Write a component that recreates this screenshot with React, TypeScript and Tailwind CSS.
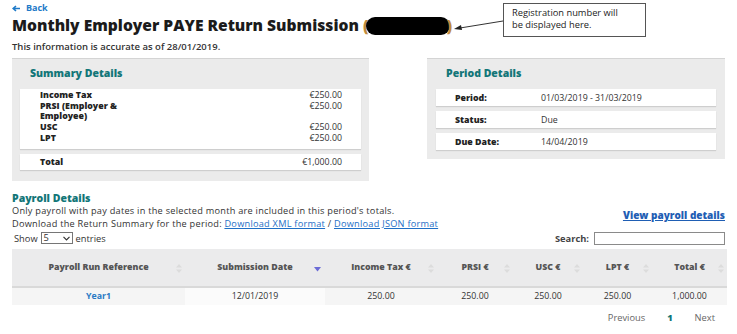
import React from 'react';

const summaryRows = [
  { label: 'Income Tax', value: '€250.00' },
  { label: 'PRSI (Employer & Employee)', value: '€250.00' },
  { label: 'USC', value: '€250.00' },
  { label: 'LPT', value: '€250.00' },
];

const periodRows = [
  { label: 'Period:', value: '01/03/2019 - 31/03/2019' },
  { label: 'Status:', value: 'Due' },
  { label: 'Due Date:', value: '14/04/2019' },
];

const columns = [
  { title: 'Payroll Run Reference', width: 'w-[173px]' },
  { title: 'Submission Date', width: 'w-[140px]', sorted: true },
  { title: 'Income Tax €', width: 'w-[112px]' },
  { title: 'PRSI €', width: 'w-[76px]' },
  { title: 'USC €', width: 'w-[70px]' },
  { title: 'LPT €', width: 'w-[69px]' },
  { title: 'Total €', width: 'w-[75px]' },
];

const row = ['Year1', '12/01/2019', '250.00', '250.00', '250.00', '250.00', '1,000.00'];

const SortIcon = ({ active }: { active?: boolean }) =>
  active ? (
    <svg width="7" height="5" viewBox="0 0 7 5" className="absolute right-[4px] top-[18px]">
      <path d="M0 0h7L3.5 4.5z" fill="#6b6bd6" />
    </svg>
  ) : (
    <svg width="6" height="9" viewBox="0 0 6 9" className="absolute right-[3px] top-[15px]">
      <path d="M0 3.5L3 0l3 3.5z" fill="#dcdcdc" />
      <path d="M0 5.5h6L3 9z" fill="#dcdcdc" />
    </svg>
  );

export default function App() {
  return (
    <div className="relative w-[737px] h-[334px] bg-white overflow-hidden font-['Open_Sans',sans-serif] text-[#333]">
      <div className="px-[12px] pt-[2px]">
        {/* Header */}
        <a className="flex items-center gap-[6px] text-[9px] font-bold text-[#1e7ac8] leading-[12px]">
          <svg width="8" height="7" viewBox="0 0 8 7">
            <path d="M8 3.5H2M4 1L1.2 3.5 4 6" stroke="#1e7ac8" strokeWidth="1.6" fill="none" />
          </svg>
          Back
        </a>
        <h1 className="mt-[1px] flex items-center text-[15.6px] font-extrabold text-[#1b1b1b] leading-[21px]">
          Monthly Employer PAYE Return Submission&nbsp;
          <span className="text-[#c08a3e]">(</span>
          <span className="inline-block w-[84px] h-[18px] -mx-[3px] rounded-full bg-black" />
          <span className="text-[#c08a3e]">)</span>
        </h1>
        <p className="mt-[5px] text-[9.5px] font-semibold text-[#333] leading-[12px]">
          This information is accurate as of 28/01/2019.
        </p>

        {/* Panels */}
        <div className="mt-[5px] flex items-start justify-between">
          <div className="w-[357px] h-[123px] bg-[#ebebeb] border-t border-[#d4d4d4] px-[8px] pt-[7px]">
            <h2 className="pl-[10px] text-[10.5px] font-extrabold text-[#127678] leading-[14px]">Summary Details</h2>
            <div className="mt-[9px] bg-white shadow-[0_1px_1px_rgba(0,0,0,0.12)] pl-[20px] pr-[19px] pt-[1px] pb-[5px] text-[8.8px] font-extrabold leading-[10.7px] text-[#222]">
              {summaryRows.map((r) => (
                <div key={r.label} className="flex justify-between">
                  <span className="w-[110px]">{r.label}</span>
                  <span className="font-normal text-[#333]">{r.value}</span>
                </div>
              ))}
            </div>
            <div className="mt-[5px] bg-white shadow-[0_1px_1px_rgba(0,0,0,0.12)] pl-[20px] pr-[19px] py-[3px] text-[8.8px] font-extrabold leading-[10.6px] text-[#222] flex justify-between">
              <span>Total</span>
              <span className="font-normal text-[#333]">€1,000.00</span>
            </div>
          </div>

          <div className="w-[298px] h-[101px] bg-[#ebebeb] border-t border-[#d4d4d4] px-[9px] pt-[7px]">
            <h2 className="pl-[10px] text-[10.5px] font-extrabold text-[#127678] leading-[14px]">Period Details</h2>
            <div className="mt-[9px] flex flex-col gap-[5px]">
              {periodRows.map((r) => (
                <div
                  key={r.label}
                  className="h-[17px] bg-white shadow-[0_1px_1px_rgba(0,0,0,0.12)] flex items-center pl-[19px] text-[8.8px] leading-[10px]"
                >
                  <span className="w-[86px] font-extrabold text-[#222]">{r.label}</span>
                  <span className="text-[#333]">{r.value}</span>
                </div>
              ))}
            </div>
          </div>
        </div>

        {/* Payroll details */}
        <h2 className="mt-[11px] text-[10.5px] font-extrabold text-[#127678] leading-[13px]">Payroll Details</h2>
        <div className="flex items-end justify-between">
          <div className="text-[9.2px] tracking-[0.25px] leading-[12.8px] text-[#333]">
            <p>Only payroll with pay dates in the selected month are included in this period's totals.</p>
            <p>
              Download the Return Summary for the period:{' '}
              <a className="text-[#1f6fc6] underline">Download XML format</a> /{' '}
              <a className="text-[#1f6fc6] underline">Download JSON format</a>
            </p>
          </div>
          <a className="mb-[10px] text-[10px] font-extrabold text-[#1f5eb4] underline leading-[12px]">View payroll details</a>
        </div>

        <div className="mt-[1px] flex items-center justify-between text-[9.3px] text-[#333] leading-[11px]">
          <div className="flex items-center pl-[2px]">
            <span>Show</span>
            <div className="ml-[3px] mr-[3px] w-[32px] h-[12px] border border-[#767676] flex items-center justify-between px-[2px] bg-white">
              <span className="leading-[10px]">5</span>
              <svg width="7" height="5" viewBox="0 0 7 5">
                <path d="M0.5 0.8l3 3 3-3" stroke="#333" strokeWidth="1.2" fill="none" />
              </svg>
            </div>
            <span>entries</span>
          </div>
          <div className="flex items-center gap-[5px]">
            <span className="font-bold text-[#444]">Search:</span>
            <div className="w-[131px] h-[13px] border border-[#8a8a8a] bg-white" />
          </div>
        </div>

        {/* Table */}
        <table className="mt-[4px] w-[715px] table-fixed border-collapse text-[8.8px]">
          <thead>
            <tr className="bg-[#ebebec] h-[38px] border-b-2 border-[#d9d9d9]">
              {columns.map((c) => (
                <th key={c.title} className={`${c.width} relative font-extrabold text-[#555] text-center`}>
                  {c.title}
                  <SortIcon active={c.sorted} />
                </th>
              ))}
            </tr>
          </thead>
          <tbody>
            <tr className="h-[18px] bg-[#f5f5f5]">
              {row.map((v, i) => (
                <td
                  key={i}
                  className={
                    i === 0
                      ? 'text-center font-bold text-[#2a7ac4]'
                      : i === 1
                      ? 'text-center bg-[#fbfbfb] text-[#333]'
                      : 'text-center text-[#333]'
                  }
                >
                  {v}
                </td>
              ))}
            </tr>
          </tbody>
        </table>

        <div className="mt-[7px] flex justify-end items-center text-[9.3px] leading-[11px] pr-[10px]">
          <span className="text-[#666]">Previous</span>
          <span className="ml-[22px] font-extrabold text-[#127678]">1</span>
          <span className="ml-[22px] text-[#666]">Next</span>
        </div>
      </div>

      {/* Annotation callout */}
      <div className="absolute left-[503px] top-[3px] w-[143px] h-[34px] border border-[#555] bg-white px-[8px] pt-[3px] text-[9.3px] leading-[12px] text-[#222]">
        Registration number will
        <br />
        be displayed here.
      </div>
      <svg className="absolute left-[452px] top-[18px]" width="52" height="14" viewBox="0 0 52 14">
        <line x1="51" y1="3" x2="8" y2="10" stroke="#333" strokeWidth="1" />
        <path d="M2 11l7-4 1 5z" fill="#222" />
      </svg>
    </div>
  );
}
